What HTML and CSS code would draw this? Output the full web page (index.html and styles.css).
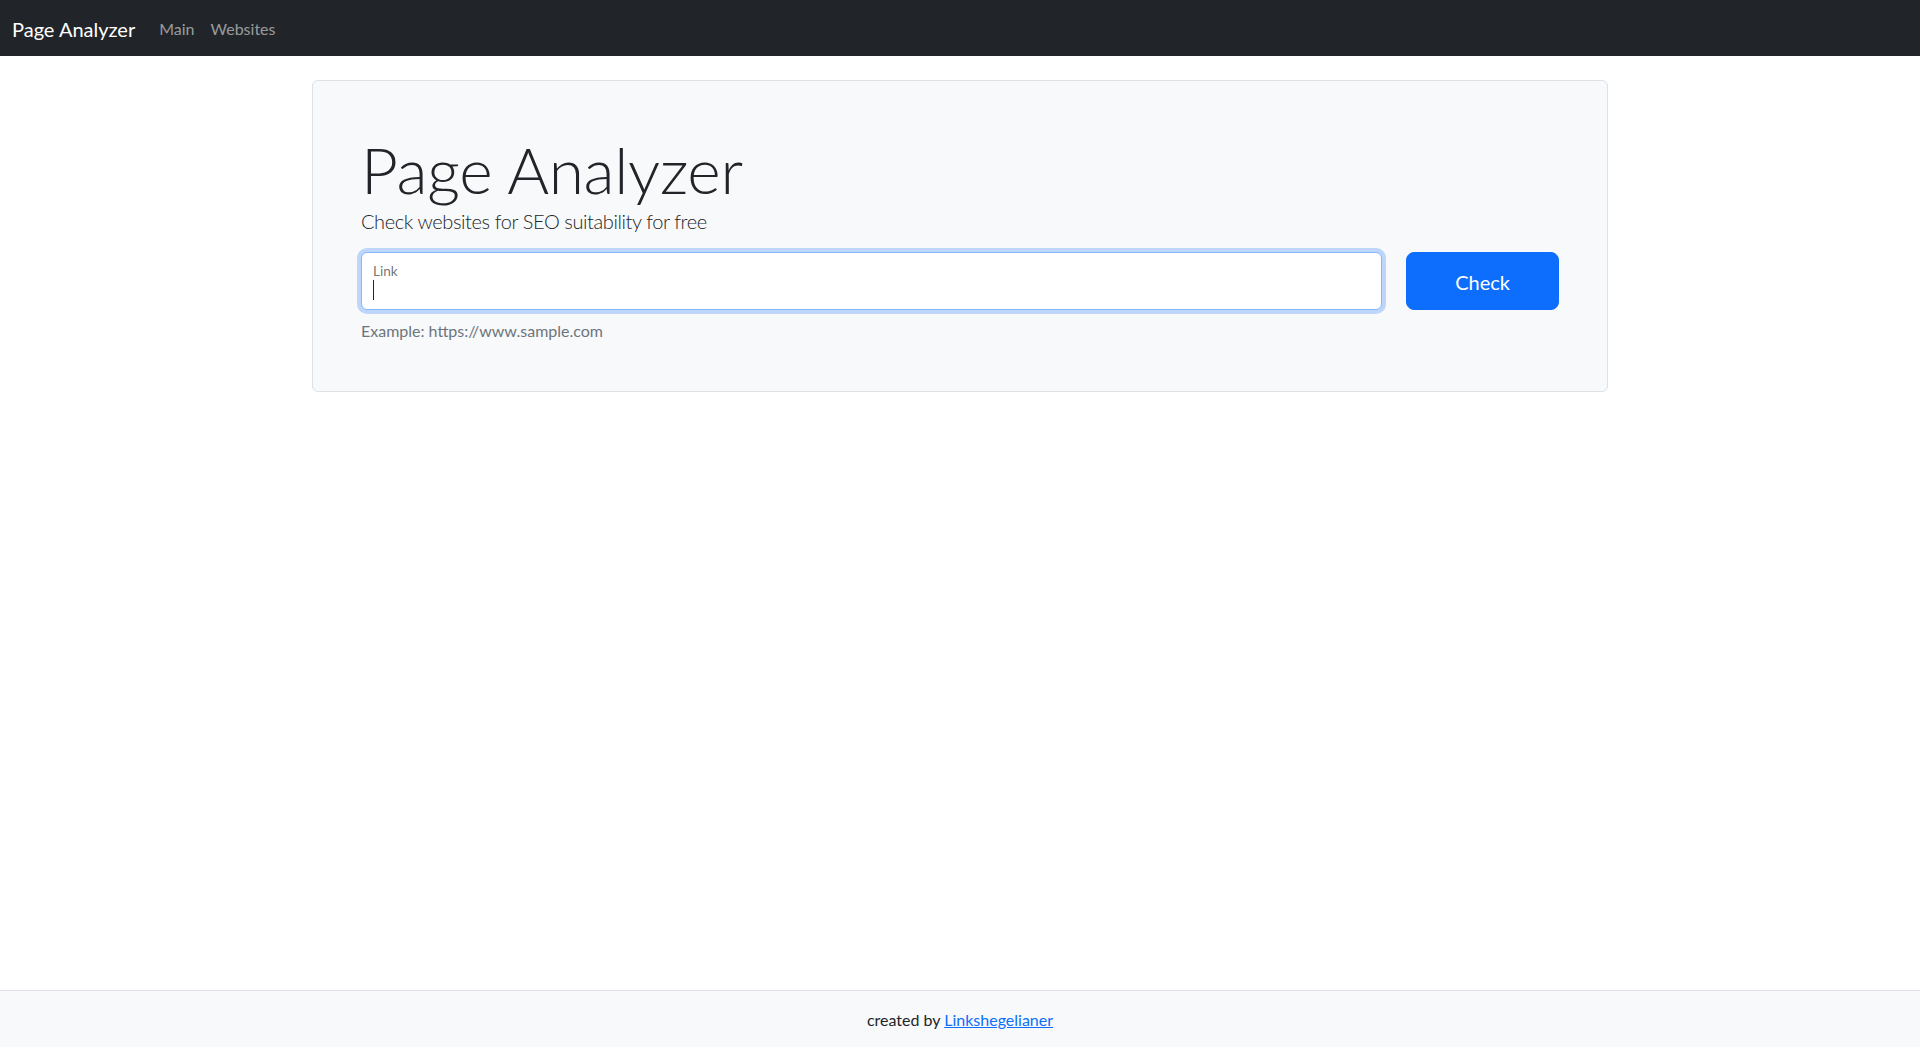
FILE: index.html
```html
<!DOCTYPE html>
<html lang="en">
<head>
<meta charset="utf-8">
<title>Page Analyzer</title>
<link rel="stylesheet" href="styles.css">
</head>
<body>
<nav class="navbar">
  <a class="brand" href="#">Page Analyzer</a>
  <div class="nav-links">
    <a class="nav-link" href="#">Main</a>
    <a class="nav-link" href="#">Websites</a>
  </div>
</nav>
<main class="container">
  <div class="hero">
    <h1 class="display">Page Analyzer</h1>
    <p class="lead">Check websites for SEO suitability for free</p>
    <form class="check-form" action="#">
      <div class="field-col">
        <div class="floating">
          <input class="field" type="text" id="url" placeholder=" ">
          <label class="field-label" for="url">Link</label>
          <span class="caret"></span>
        </div>
        <div class="form-text">Example: https://www.sample.com</div>
      </div>
      <button class="btn-check" type="button">Check</button>
    </form>
  </div>
</main>
<footer class="footer">
  created by <a class="footer-link" href="#">Linkshegelianer</a>
</footer>
</body>
</html>
```
FILE: styles.css
```css
* { box-sizing: border-box; }
html, body { height: 100%; }
body {
  margin: 0;
  min-height: 100vh;
  display: flex;
  flex-direction: column;
  font-family: Lato, "Open Sans", "Noto Sans", sans-serif;
  font-size: 16px;
  line-height: 1.5;
  color: #212529;
  background: #fff;
}
.navbar {
  background: #212529;
  display: flex;
  align-items: center;
  padding: 9px 12px 7px;
  height: 56px;
}
.brand {
  color: #fff;
  text-decoration: none;
  font-size: 20px;
  line-height: 30px;
  padding: 5px 0;
  margin-right: 16px;
}
.nav-links { display: flex; }
.nav-link {
  color: rgba(255,255,255,.55);
  text-decoration: none;
  padding: 8px 8px;
  line-height: 24px;
}
.container {
  width: 1320px;
  margin: 24px auto 0;
  padding: 0 12px;
}
.hero {
  background: #f8f9fa;
  border: 1px solid #dee2e6;
  border-radius: 6px;
  padding: 48px;
}
.display {
  font-size: 64px;
  font-weight: 300;
  line-height: 76.8px;
  margin: 3px 0 0;
  letter-spacing: -0.3px;
}
.lead {
  font-size: 20px;
  font-weight: 300;
  line-height: 30px;
  margin: -3px 0 16px;
  letter-spacing: -0.4px;
}
.check-form {
  display: flex;
  gap: 24px;
  align-items: flex-start;
}
.field-col { flex: 1; }
.floating { position: relative; }
.field {
  display: block;
  width: 100%;
  height: 58px;
  padding: 26px 12px 8px;
  font: inherit;
  font-size: 16px;
  color: #212529;
  background: #fff;
  border: 1px solid #86b7fe;
  border-radius: 6px;
  box-shadow: 0 0 0 4px rgba(13,110,253,.25);
  outline: none;
}
.field-label {
  position: absolute;
  left: 12px;
  top: 9px;
  font-size: 13.6px;
  line-height: 20px;
  color: rgba(33,37,41,.65);
}
.caret {
  position: absolute;
  left: 12px;
  top: 28px;
  width: 1px;
  height: 20px;
  background: #212529;
}
.form-text {
  margin-top: 9px;
  font-size: 16px;
  line-height: 24px;
  color: #6c757d;
}
.btn-check {
  flex: none;
  height: 58px;
  padding: 9px 48px 7px;
  font: inherit;
  font-size: 20px;
  line-height: 30px;
  color: #fff;
  background: #0d6efd;
  border: 1px solid #0d6efd;
  border-radius: 8px;
}
.footer {
  margin-top: auto;
  background: #f8f9fa;
  border-top: 1px solid #dee2e6;
  padding: 17px 0 15px;
  text-align: center;
  line-height: 24px;
}
.footer-link { color: #0d6efd; text-decoration: underline; }
```
